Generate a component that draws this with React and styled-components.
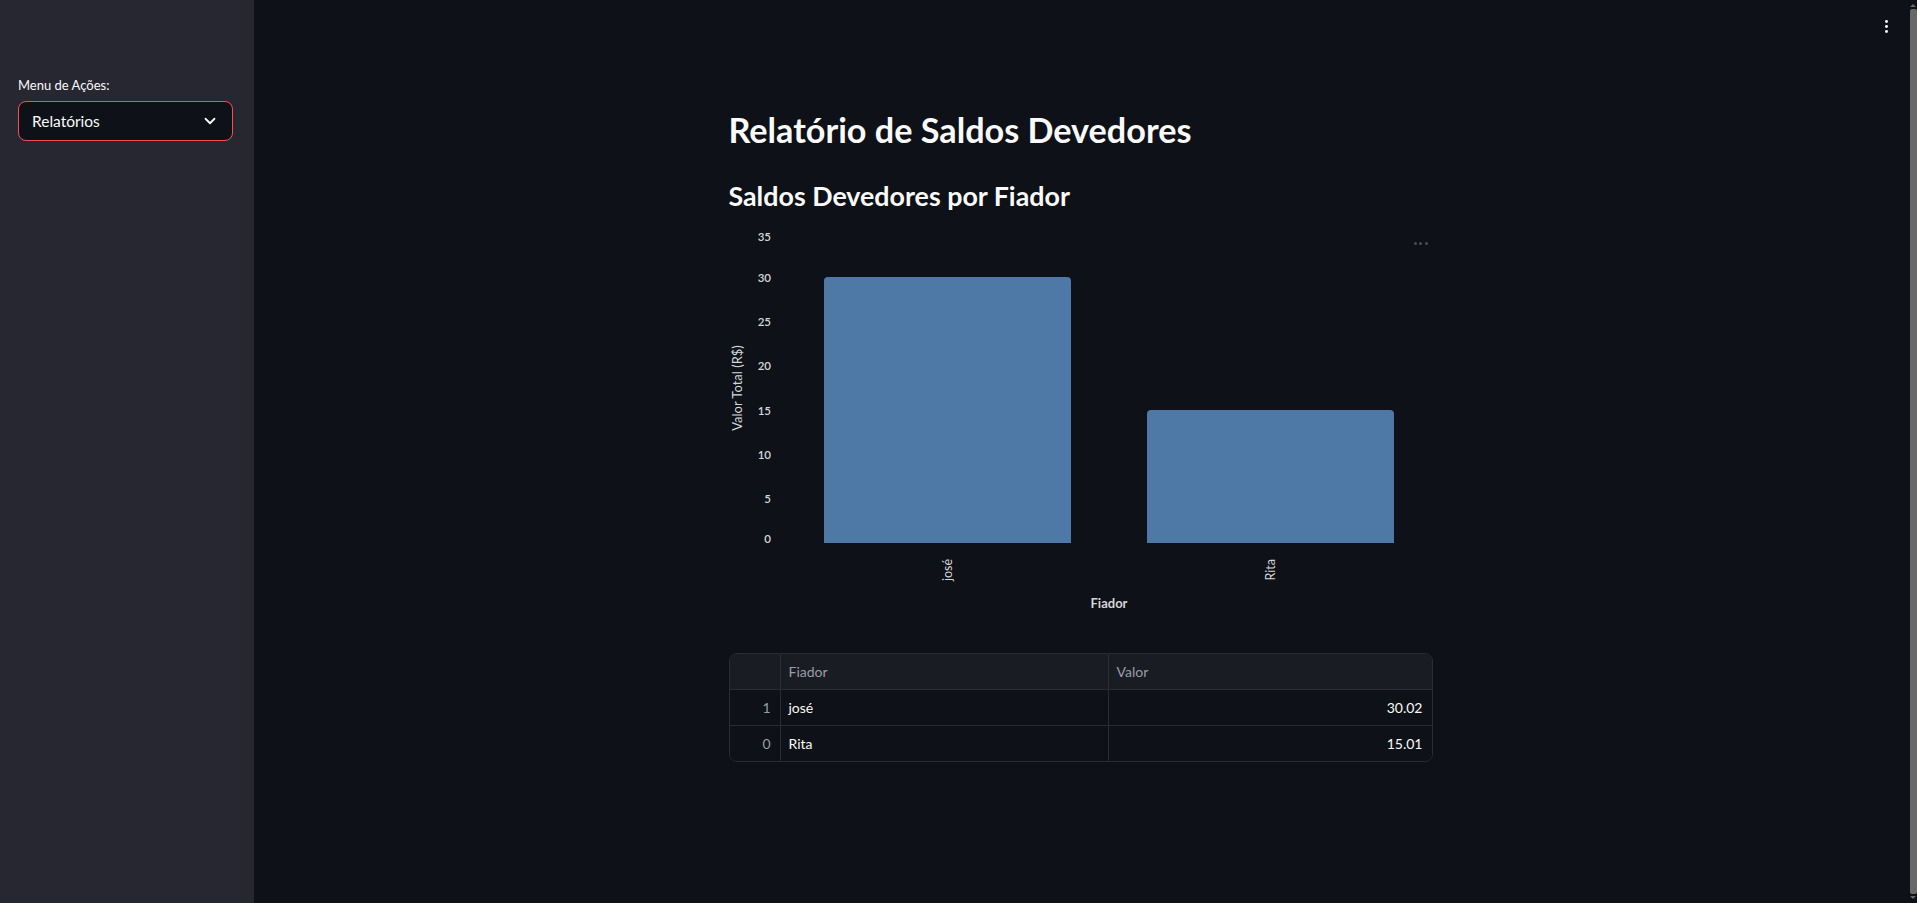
import React from 'react'
import styled, { createGlobalStyle } from 'styled-components'
import { ChevronDown, EllipsisVertical } from 'lucide-react'

const GlobalStyle = createGlobalStyle`
    html, body {
        margin: 0;
        padding: 0;
        background: #0e1117;
        color: #fafafa;
        font-family: Lato, "Noto Sans", sans-serif;
        overflow: hidden;
    }
`

const Page = styled.div`
    display: flex;
    height: 100vh;
`

const Sidebar = styled.aside`
    width: 254px;
    flex-shrink: 0;
    box-sizing: border-box;
    background: #262730;
    padding: 77px 21px 0 18px;
`

const FieldLabel = styled.label`
    display: block;
    font-size: 13px;
    line-height: 16px;
    color: #fafafa;
    margin-bottom: 8px;
`

const SelectBox = styled.div`
    display: flex;
    align-items: center;
    justify-content: space-between;
    height: 40px;
    box-sizing: border-box;
    padding: 0 13px 0 13px;
    background: #0e1117;
    border: 1px solid #ff4b4b;
    border-radius: 8px;
    font-size: 15.5px;
    color: #fafafa;
    cursor: pointer;
`

const Main = styled.main`
    position: relative;
    flex: 1;
    background: #0e1117;
`

const Toolbar = styled.div`
    position: absolute;
    top: 18px;
    right: 12px;
    display: flex;
    color: #fafafa;
`

const ScrollTrack = styled.div`
    width: 10px;
    flex-shrink: 0;
    display: flex;
    flex-direction: column;
    align-items: flex-end;
    padding: 4px 0;
    box-sizing: border-box;
    background: #0e1117;
`

const ScrollArrow = styled.div`
    width: 0;
    height: 0;
    margin-right: 1px;
    border-left: 3px solid transparent;
    border-right: 3px solid transparent;
    ${(p) => (p.down ? 'border-top: 3px solid #686868;' : 'border-bottom: 3px solid #686868;')}
`

const ScrollThumb = styled.div`
    flex: 1;
    width: 7px;
    margin: 2px 0;
    background: #686868;
    border-radius: 2px;
`

const Content = styled.div`
    width: 704px;
    margin: 0 auto;
    padding-top: 110px;
`

const Title = styled.h1`
    margin: 0;
    font-size: 34.2px;
    line-height: 39px;
    font-weight: 700;
    color: #fafafa;
`

const Subtitle = styled.h2`
    margin: 31px 0 0;
    font-size: 26.8px;
    line-height: 33px;
    font-weight: 700;
    color: #fafafa;
`

const ChartWrap = styled.div`
    position: relative;
    margin-top: 12px;
    height: 390px;
`

const ChartMenu = styled.div`
    position: absolute;
    top: 17px;
    right: 5px;
    display: flex;
    gap: 2.5px;
`

const Dot = styled.span`
    width: 3px;
    height: 3px;
    border-radius: 50%;
    background: #4a4d56;
`

const Table = styled.div`
    margin-top: 38px;
    border: 1px solid #2a2c34;
    border-radius: 8px;
    overflow: hidden;
    font-size: 14px;
`

const Row = styled.div`
    display: grid;
    grid-template-columns: 50px 328px 1fr;
    height: 35px;
    background: ${(p) => (p.header ? '#1a1c24' : '#0e1117')};
    color: ${(p) => (p.header ? '#9b9da6' : '#fafafa')};
    border-top: ${(p) => (p.first ? 'none' : '1px solid #2a2c34')};
`

const Cell = styled.div`
    display: flex;
    align-items: center;
    padding: 0 9px 0 8px;
    justify-content: ${(p) => (p.right ? 'flex-end' : 'flex-start')};
    color: ${(p) => (p.muted ? '#9b9da6' : 'inherit')};
    border-left: ${(p) => (p.first ? 'none' : '1px solid #2a2c34')};
`

const data = [
    { idx: 1, name: 'josé', value: 30.02 },
    { idx: 0, name: 'Rita', value: 15.01 },
]

const ZERO_Y = 318
const UNIT = 8.86
const BAR_W = 247
const BAR_X = [95, 418]
const ticks = [0, 5, 10, 15, 20, 25, 30, 35]

function barPath(x, top, w, r) {
    return `M${x},${ZERO_Y} L${x},${top + r} Q${x},${top} ${x + r},${top} L${x + w - r},${top} Q${x + w},${top} ${x + w},${top + r} L${x + w},${ZERO_Y} Z`
}

function tickY(v) {
    if (v === 35) return ZERO_Y - v * UNIT + 4
    if (v === 0) return ZERO_Y - 5
    return ZERO_Y - v * UNIT
}

function BarChart() {
    const sorted = [...data].sort((a, b) => a.name.localeCompare(b.name))
    return (
        <ChartWrap>
            <svg width="704" height="390" style={{ display: 'block' }}>
                <g fontFamily="Lato, sans-serif" fill="#d5d6da">
                    {ticks.map((t) => (
                        <text key={t} x="42" y={tickY(t)} fontSize="11.5" fontWeight="600" textAnchor="end" dominantBaseline="central">
                            {t}
                        </text>
                    ))}
                    <text transform="translate(8,163) rotate(-90)" fontSize="13" textAnchor="middle" dominantBaseline="central">
                        Valor Total (R$)
                    </text>
                    {sorted.map((d, i) => (
                        <g key={d.name}>
                            <path d={barPath(BAR_X[i], ZERO_Y - d.value * UNIT, BAR_W, 4)} fill="#4e79a7" />
                            <text
                                transform={`translate(${BAR_X[i] + BAR_W / 2},334) rotate(-90)`}
                                fontSize="12.5"
                                textAnchor="end"
                                dominantBaseline="central"
                            >
                                {d.name}
                            </text>
                        </g>
                    ))}
                    <text x="380" y="378" fontSize="13" fontWeight="700" textAnchor="middle" dominantBaseline="central">
                        Fiador
                    </text>
                </g>
            </svg>
            <ChartMenu>
                <Dot />
                <Dot />
                <Dot />
            </ChartMenu>
        </ChartWrap>
    )
}

function DataTable() {
    return (
        <Table>
            <Row header first>
                <Cell first />
                <Cell>Fiador</Cell>
                <Cell>Valor</Cell>
            </Row>
            {data.map((d) => (
                <Row key={d.idx}>
                    <Cell first right muted>{d.idx}</Cell>
                    <Cell>{d.name}</Cell>
                    <Cell right>{d.value.toFixed(2)}</Cell>
                </Row>
            ))}
        </Table>
    )
}

export default function App() {
    return (
        <>
            <GlobalStyle />
            <Page>
                <Sidebar>
                    <FieldLabel>Menu de Ações:</FieldLabel>
                    <SelectBox>
                        <span>Relatórios</span>
                        <ChevronDown size={18} strokeWidth={2.4} />
                    </SelectBox>
                </Sidebar>
                <Main>
                    <Toolbar>
                        <EllipsisVertical size={17} strokeWidth={2.2} />
                    </Toolbar>
                    <Content>
                        <Title>Relatório de Saldos Devedores</Title>
                        <Subtitle>Saldos Devedores por Fiador</Subtitle>
                        <BarChart />
                        <DataTable />
                    </Content>
                </Main>
                <ScrollTrack>
                    <ScrollArrow />
                    <ScrollThumb />
                    <ScrollArrow down />
                </ScrollTrack>
            </Page>
        </>
    )
}
